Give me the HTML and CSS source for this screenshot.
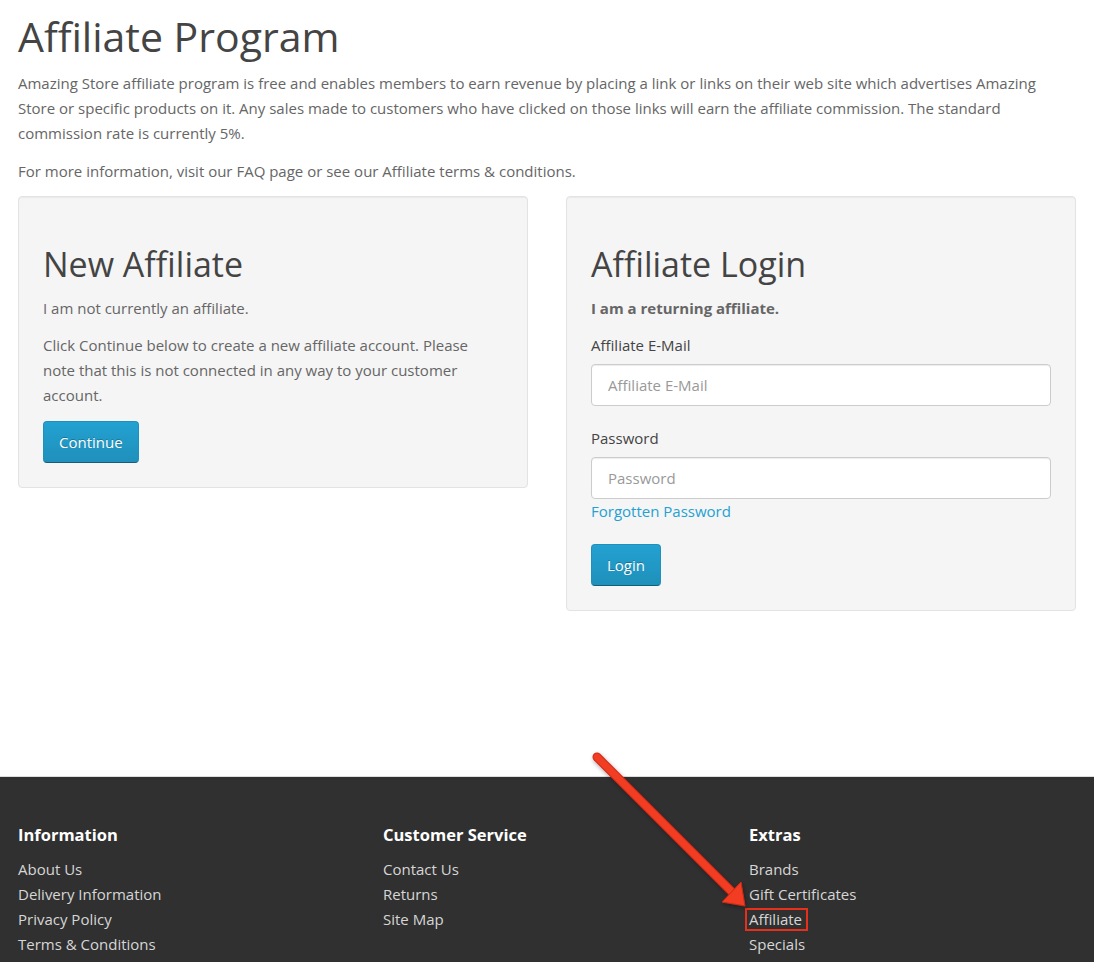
FILE: index.html
```html
<!DOCTYPE html>
<html lang="en">
<head>
<meta charset="utf-8">
<title>Affiliate Program</title>
<link rel="stylesheet" href="styles.css">
</head>
<body>
<main class="container">
  <h1 class="page-title">Affiliate Program</h1>
  <p>Amazing Store affiliate program is free and enables members to earn revenue by placing a link or links on their web site which advertises Amazing Store or specific products on it. Any sales made to customers who have clicked on those links will earn the affiliate commission. The standard commission rate is currently 5%.</p>
  <p>For more information, visit our FAQ page or see our Affiliate terms &amp; conditions.</p>
  <div class="cards">
    <section class="well">
      <h2>New Affiliate</h2>
      <p>I am not currently an affiliate.</p>
      <p>Click Continue below to create a new affiliate account. Please note that this is not connected in any way to your customer account.</p>
      <div class="actions"><a class="btn" href="#">Continue</a></div>
    </section>
    <section class="well">
      <h2>Affiliate Login</h2>
      <p><strong>I am a returning affiliate.</strong></p>
      <form class="form">
        <div class="form-group">
          <label for="email">Affiliate E-Mail</label>
          <input id="email" type="text" placeholder="Affiliate E-Mail">
        </div>
        <div class="form-group">
          <label for="pw">Password</label>
          <input id="pw" type="password" placeholder="Password">
          <a class="link" href="#">Forgotten Password</a>
        </div>
        <button class="btn" type="button">Login</button>
      </form>
    </section>
  </div>
</main>
<footer class="footer">
  <div class="col">
    <h5>Information</h5>
    <ul>
      <li><a href="#">About Us</a></li>
      <li><a href="#">Delivery Information</a></li>
      <li><a href="#">Privacy Policy</a></li>
      <li><a href="#">Terms &amp; Conditions</a></li>
    </ul>
  </div>
  <div class="col">
    <h5>Customer Service</h5>
    <ul>
      <li><a href="#">Contact Us</a></li>
      <li><a href="#">Returns</a></li>
      <li><a href="#">Site Map</a></li>
    </ul>
  </div>
  <div class="col">
    <h5>Extras</h5>
    <ul>
      <li><a href="#">Brands</a></li>
      <li><a href="#">Gift Certificates</a></li>
      <li><a class="marked" href="#">Affiliate</a></li>
      <li><a href="#">Specials</a></li>
    </ul>
  </div>
</footer>
<svg class="annotation" width="1094" height="962" viewBox="0 0 1094 962" aria-hidden="true">
  <defs>
    <filter id="sh" x="-20%" y="-20%" width="140%" height="140%">
      <feDropShadow dx="1" dy="2" stdDeviation="2" flood-color="#000" flood-opacity="0.35"/>
    </filter>
  </defs>
  <g filter="url(#sh)">
    <line x1="597" y1="757" x2="731" y2="891" stroke="#c92a17" stroke-width="9" stroke-linecap="round"/>
    <line x1="597" y1="757" x2="731" y2="891" stroke="#f23c20" stroke-width="7" stroke-linecap="round"/>
    <polygon points="745,906 722,902 741,882" fill="#f23c20" stroke="#c92a17" stroke-width="1" stroke-linejoin="round"/>
  </g>
</svg>
</body>
</html>
```

FILE: styles.css
```css
* { box-sizing: border-box; }

html, body {
  margin: 0;
  padding: 0;
}

body {
  position: relative;
  font-family: "Open Sans", "Noto Sans", sans-serif;
  font-size: 15px;
  line-height: 25px;
  color: #666;
  background: #fff;
  min-height: 962px;
}

.container {
  padding: 14px 18px 0;
  height: 776px;
}

.page-title {
  margin: 0 0 12px;
  font-size: 41px;
  line-height: 45px;
  font-weight: 400;
  color: #444;
}

p {
  margin: 0 0 12.5px;
}

.cards {
  display: grid;
  grid-template-columns: 1fr 1fr;
  column-gap: 38px;
  align-items: start;
  margin-top: 12px;
}

.well {
  background: #f5f5f5;
  border: 1px solid #e3e3e3;
  border-radius: 4px;
  box-shadow: inset 0 1px 1px rgba(0, 0, 0, 0.05);
  padding: 24px;
}

.well p {
  margin-bottom: 12px;
}

.well h2 {
  margin: 25px 0 13px;
  font-size: 34px;
  line-height: 37px;
  font-weight: 400;
  color: #444;
}

.well strong {
  font-weight: 700;
  color: #666;
}

.actions {
  padding-top: 1px;
}

.btn {
  display: inline-block;
  height: 42px;
  padding: 0 15px;
  font-family: inherit;
  font-size: 15px;
  font-weight: 500;
  line-height: 40px;
  color: #fff;
  text-decoration: none;
  text-shadow: 0 -1px 0 rgba(0, 0, 0, 0.25);
  background: linear-gradient(to bottom, #23a1d1, #1f90bb);
  border: 1px solid #1f90bb;
  border-bottom-color: #145e7a;
  border-radius: 4px;
  cursor: pointer;
}

.form-group {
  margin-bottom: 20px;
}

.form-group label {
  display: block;
  margin-bottom: 6px;
  color: #444;
  font-weight: 400;
}

.form-group input {
  display: block;
  width: 100%;
  height: 42px;
  padding: 0 16px;
  font-family: inherit;
  font-size: 15px;
  color: #555;
  background: #fff;
  border: 1px solid #ccc;
  border-radius: 4px;
  box-shadow: inset 0 1px 1px rgba(0, 0, 0, 0.075);
}

.form-group input::placeholder {
  color: #999;
}

.link {
  display: block;
  color: #23a1d1;
  text-decoration: none;
}

.footer {
  display: grid;
  grid-template-columns: 365px 366px 1fr;
  background: #303030;
  border-top: 1px solid #ddd;
  padding-top: 45px;
  height: 186px;
  overflow: hidden;
}

.footer .col {
  padding-left: 18px;
}

.footer h5 {
  margin: 0 0 10px;
  font-size: 16.5px;
  line-height: 25px;
  font-weight: 700;
  color: #fff;
}

.footer ul {
  list-style: none;
  margin: 0;
  padding: 0;
}

.footer a {
  color: #d6d6d6;
  text-decoration: none;
}

.footer .marked {
  position: relative;
}

.footer .marked::after {
  content: "";
  position: absolute;
  top: -1px;
  bottom: -2px;
  left: -4px;
  right: -6px;
  border: 2px solid #e5301c;
}

.annotation {
  position: absolute;
  top: 0;
  left: 0;
  pointer-events: none;
}
```
